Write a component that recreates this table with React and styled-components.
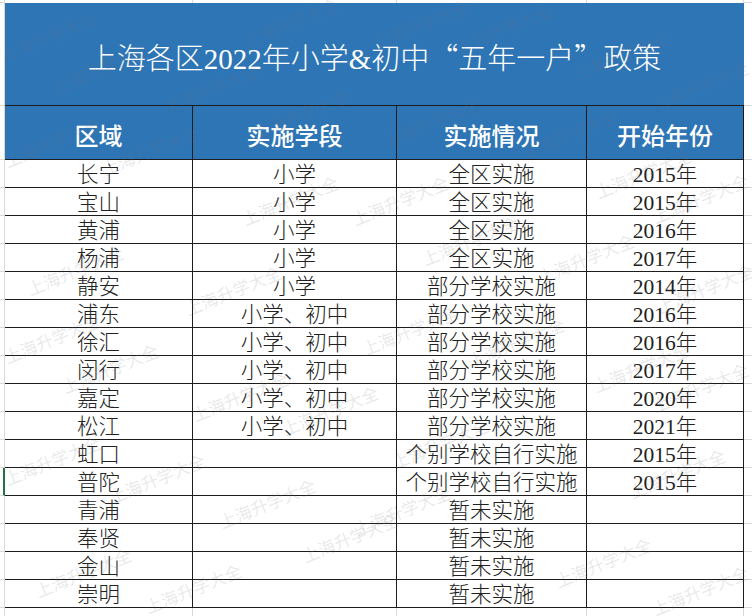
import styled, { createGlobalStyle } from "styled-components";

const GlobalStyle = createGlobalStyle`
  html, body {
    margin: 0;
    padding: 0;
    background: #ffffff;
  }
`;

const BLUE = "#2e75b6";
const GRID = "#d9d9d9";
const LINE = "#1c1c1c";

const Page = styled.div`
  position: relative;
  width: 752px;
  height: 616px;
  overflow: hidden;
  background: #fff;
  font-family: "Liberation Serif", "Noto Sans CJK SC", serif;
`;

const Sheet = styled.div`
  display: grid;
  grid-template-columns: 5px 188px 204px 190px 157px 8px;
  grid-template-rows: 3px 103px 54px repeat(16, 28px) 20px;
`;

const Gutter = styled.div`
  box-sizing: border-box;
  border-right: ${(p) => (p.$selected ? "2px solid #217346" : `1px solid ${GRID}`)};
  border-bottom: 1px solid ${GRID};
`;

const Edge = styled.div`
  box-sizing: border-box;
  border-bottom: 1px solid ${GRID};
`;

const Blank = styled.div`
  box-sizing: border-box;
  border-right: 1px solid ${GRID};
`;

const Title = styled.div`
  grid-column: 2 / 6;
  box-sizing: border-box;
  background: ${BLUE};
  border-bottom: 1px solid ${LINE};
  color: #fff;
  font-size: 29px;
  font-weight: 300;
  display: flex;
  align-items: center;
  justify-content: center;
  padding-top: 4px;
  white-space: nowrap;
`;

const Cjk = styled.span`
  font-family: "Noto Sans CJK SC", sans-serif;
`;

const HeadCell = styled.div`
  box-sizing: border-box;
  background: ${BLUE};
  border-right: 1px solid ${LINE};
  border-bottom: 1px solid ${LINE};
  color: #fff;
  font-size: 24px;
  font-weight: 500;
  display: flex;
  align-items: center;
  justify-content: center;
  padding-top: 3px;
`;

const Cell = styled.div`
  box-sizing: border-box;
  border-right: 1px solid ${LINE};
  border-bottom: 1px solid ${LINE};
  color: #222;
  font-size: 21.5px;
  font-weight: 300;
  line-height: 1;
  display: flex;
  align-items: center;
  justify-content: center;
  padding-top: 4px;
  white-space: nowrap;
`;

const Mark = styled.span`
  position: absolute;
  transform: translate(-50%, -50%) rotate(-22deg);
  font-family: "Noto Sans CJK SC", sans-serif;
  font-size: 17px;
  color: rgba(110, 110, 110, 0.16);
  white-space: nowrap;
  pointer-events: none;
`;

const rows = [
  ["长宁", "小学", "全区实施", "2015年"],
  ["宝山", "小学", "全区实施", "2015年"],
  ["黄浦", "小学", "全区实施", "2016年"],
  ["杨浦", "小学", "全区实施", "2017年"],
  ["静安", "小学", "部分学校实施", "2014年"],
  ["浦东", "小学、初中", "部分学校实施", "2016年"],
  ["徐汇", "小学、初中", "部分学校实施", "2016年"],
  ["闵行", "小学、初中", "部分学校实施", "2017年"],
  ["嘉定", "小学、初中", "部分学校实施", "2020年"],
  ["松江", "小学、初中", "部分学校实施", "2021年"],
  ["虹口", "", "个别学校自行实施", "2015年"],
  ["普陀", "", "个别学校自行实施", "2015年"],
  ["青浦", "", "暂未实施", ""],
  ["奉贤", "", "暂未实施", ""],
  ["金山", "", "暂未实施", ""],
  ["崇明", "", "暂未实施", ""],
];

const marks = [
  [48, 36], [100, 68], [210, 88], [290, 22], [300, 114], [420, 24], [503, 28],
  [620, 55], [700, 85], [431, 122], [570, 133], [52, 142], [150, 150],
  [290, 200], [400, 200], [470, 240], [586, 258], [643, 173], [700, 198],
  [705, 288], [75, 270], [233, 290], [52, 338], [110, 368], [240, 396],
  [330, 410], [410, 330], [516, 342], [641, 367], [700, 387], [52, 460],
  [157, 478], [267, 503], [350, 537], [440, 443], [402, 510], [677, 473],
  [83, 572], [193, 588], [603, 562], [700, 590],
];

export default function App() {
  return (
    <Page>
      <GlobalStyle />
      <Sheet>
        <Gutter />
        <Blank />
        <Blank />
        <Blank />
        <Blank />
        <Edge />

        <Gutter />
        <Title>
          上海各区2022年小学&amp;初中<Cjk>“</Cjk>五年一户<Cjk>”</Cjk>政策
        </Title>
        <Edge />

        <Gutter />
        <HeadCell>区域</HeadCell>
        <HeadCell>实施学段</HeadCell>
        <HeadCell>实施情况</HeadCell>
        <HeadCell>开始年份</HeadCell>
        <Edge />

        {rows.map((r, i) => [
          <Gutter key={`g${i}`} $selected={r[0] === "普陀"} />,
          ...r.map((v, j) => <Cell key={`c${i}-${j}`}>{v}</Cell>),
          <Edge key={`e${i}`} />,
        ])}

        <Gutter />
        <Blank />
        <Blank />
        <Blank />
        <Blank />
        <Edge />
      </Sheet>
      {marks.map(([x, y], i) => (
        <Mark key={i} style={{ left: x, top: y }}>
          上海升学大全
        </Mark>
      ))}
    </Page>
  );
}
